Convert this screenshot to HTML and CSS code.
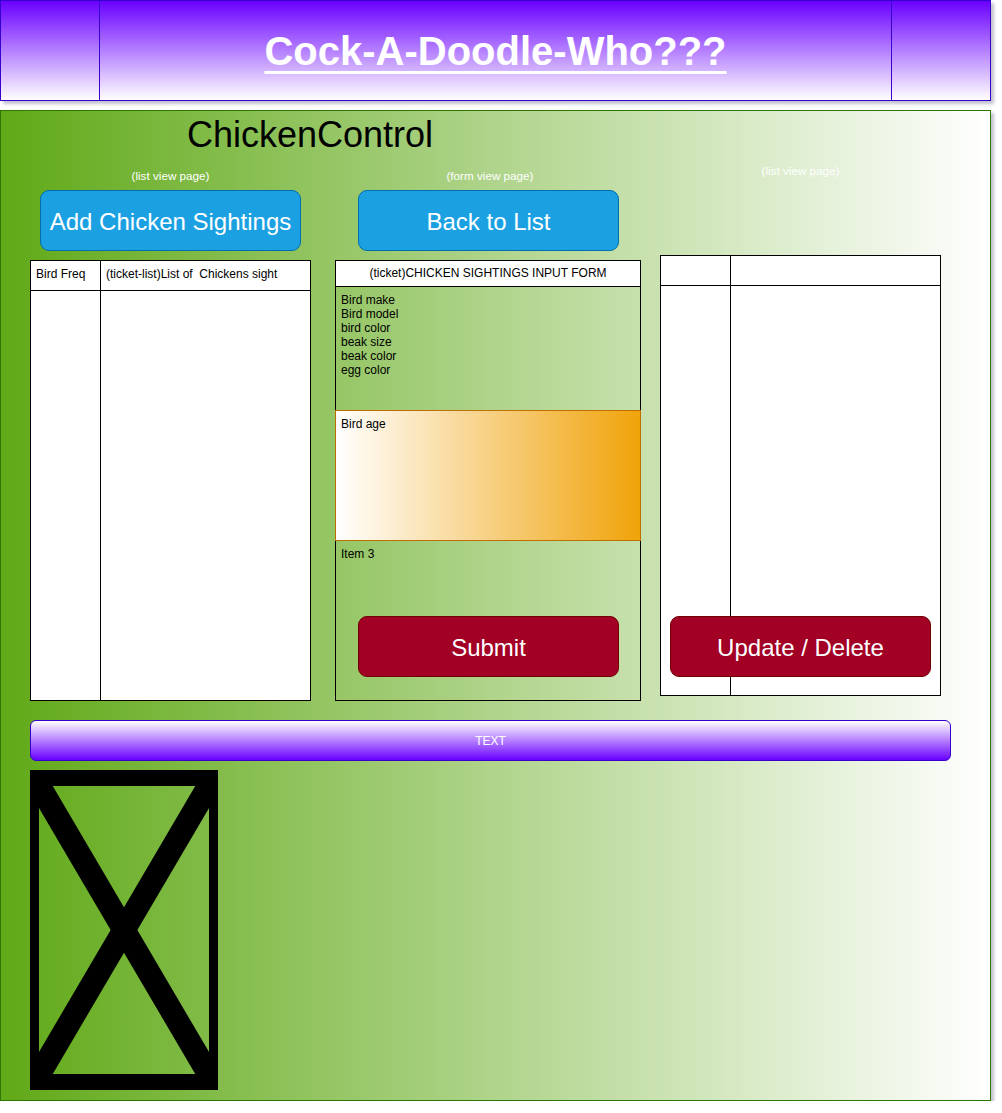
FILE: index.html
```html
<!DOCTYPE html>
<html lang="en">
<head>
<meta charset="utf-8">
<title>Cock-A-Doodle-Who???</title>
<link rel="stylesheet" href="styles.css">
</head>
<body>
<header class="topbar">
  <div class="topbar-cell"></div>
  <div class="topbar-cell topbar-middle"><h1 class="site-title">Cock-A-Doodle-Who???</h1></div>
  <div class="topbar-cell"></div>
</header>
<main class="panel">
  <h2 class="app-title">ChickenControl</h2>
  <div class="columns">
    <section class="col col-list">
      <p class="page-label">(list view page)</p>
      <button class="btn btn-blue btn-list">Add Chicken Sightings</button>
      <div class="grid-table">
        <div class="gcell gcell-first gcell-head">Bird Freq</div>
        <div class="gcell gcell-head">(ticket-list)List of&nbsp; Chickens sight</div>
        <div class="gcell gcell-first"></div>
        <div class="gcell"></div>
      </div>
    </section>
    <section class="col col-form">
      <p class="page-label page-label-form">(form view page)</p>
      <button class="btn btn-blue btn-form">Back to List</button>
      <div class="form-box">
        <div class="form-head">(ticket)CHICKEN SIGHTINGS INPUT FORM</div>
        <div class="form-fields">Bird make<br>Bird model<br>bird color<br>beak size<br>beak color<br>egg color</div>
        <div class="form-orange">Bird age</div>
        <div class="form-item">
          <div>Item 3</div>
          <button class="btn btn-red btn-submit">Submit</button>
        </div>
      </div>
    </section>
    <section class="col col-edit">
      <p class="page-label">(list view page)</p>
      <div class="grid-table grid-table-edit">
        <div class="gcell gcell-first gcell-head"></div>
        <div class="gcell gcell-head"></div>
        <div class="gcell gcell-first"></div>
        <div class="gcell"></div>
        <button class="btn btn-red btn-update">Update / Delete</button>
      </div>
    </section>
  </div>
  <div class="textbar">TEXT</div>
  <svg class="placeholder" width="188" height="320" viewBox="0 0 188 320">
    <path fill="#000" fill-rule="evenodd" d="M0 0H188V320H0Z M9 16V304H179V16Z"/>
    <g stroke="#000" stroke-width="23">
      <line x1="0" y1="0" x2="188" y2="320"/>
      <line x1="188" y1="0" x2="0" y2="320"/>
    </g>
  </svg>
</main>
</body>
</html>
```
FILE: styles.css
```css
* { box-sizing: border-box; }
html, body { margin: 0; padding: 0; background: #fff; }
body {
  font-family: "Liberation Sans", Arial, Helvetica, sans-serif;
  color: #000;
  width: 1002px;
}

.topbar {
  width: 991px;
  height: 101px;
  border: 1px solid #3700cc;
  background: linear-gradient(to bottom, #6a00ff, #ffffff);
  display: grid;
  grid-template-columns: 98px 1fr 98px;
  box-shadow: 3px 3px 3px rgba(40, 40, 90, 0.28);
}
.topbar-middle {
  border-left: 1px solid #3700cc;
  border-right: 1px solid #3700cc;
  display: flex;
  align-items: center;
  justify-content: center;
}
.site-title {
  margin: 0;
  padding-top: 1px;
  font-size: 40px;
  font-weight: bold;
  color: #fff;
  text-decoration: underline;
  text-decoration-thickness: 3px;
  text-underline-offset: 6px;
}

.panel {
  margin-top: 9px;
  width: 991px;
  height: 991px;
  border: 1px solid #2d7600;
  background: linear-gradient(to right, #60a917, #ffffff);
  box-shadow: 3px 3px 3px rgba(40, 40, 90, 0.28);
}
.app-title {
  margin: 0;
  padding: 3px 0 0 186px;
  height: 45px;
  font-size: 36px;
  line-height: 42px;
  font-weight: normal;
}

.columns {
  display: flex;
  align-items: flex-start;
  padding-left: 29px;
}
.col {
  display: flex;
  flex-direction: column;
  align-items: flex-start;
}
.col-list { width: 281px; padding-top: 13px; }
.col-form { width: 306px; margin-left: 24px; padding-top: 13px; }
.col-edit { width: 281px; margin-left: 19px; padding-top: 8px; }

.page-label {
  margin: 0;
  width: 100%;
  font-size: 11.7px;
  line-height: 14px;
  color: #fff;
  text-align: center;
}
.page-label-form { padding-left: 4px; }

.btn {
  display: block;
  width: 261px;
  height: 61px;
  padding: 2px 0 0;
  border-radius: 9px;
  border: 1px solid;
  font-family: inherit;
  font-size: 24px;
  color: #fff;
  cursor: pointer;
}
.btn-blue { background: #1ba1e2; border-color: #006eaf; }
.btn-red { background: #a20025; border-color: #6f0000; }
.btn-list { margin: 7px 0 0 10px; }
.btn-form { margin: 7px 0 0 23px; }

.grid-table {
  width: 281px;
  height: 441px;
  margin-top: 9px;
  border: 1px solid #000;
  background: #fff;
  display: grid;
  grid-template-columns: 70px 1fr;
  grid-template-rows: 30px 1fr;
  font-size: 12px;
}
.grid-table-edit { margin-top: 77px; position: relative; }
.gcell { padding-left: 5px; line-height: 27px; white-space: nowrap; overflow: hidden; }
.gcell-first { border-right: 1px solid #000; }
.gcell-head { border-bottom: 1px solid #000; }
.btn-update { position: absolute; top: 360px; left: 9px; }

.form-box {
  width: 306px;
  height: 441px;
  margin-top: 9px;
  border: 1px solid #000;
  display: flex;
  flex-direction: column;
  font-size: 12px;
  line-height: 14px;
}
.form-head {
  height: 26px;
  background: #fff;
  border-bottom: 1px solid #000;
  text-align: center;
  line-height: 25px;
}
.form-fields {
  height: 123px;
  padding: 6px 5px 0;
}
.form-orange {
  height: 131px;
  margin: 0 -1px;
  padding: 6px 5px 0;
  border: 1px solid #bd7000;
  background: linear-gradient(to right, #ffffff, #f0a30a);
}
.form-item {
  flex: 1;
  padding: 6px 5px 0;
}
.btn-submit { margin: 55px 0 0 17px; }

.textbar {
  margin: 19px 0 0 29px;
  width: 921px;
  height: 41px;
  border: 1px solid #3700cc;
  border-radius: 6px;
  background: linear-gradient(to bottom, #ffffff, #6a00ff);
  color: #fff;
  font-size: 12px;
  display: flex;
  align-items: center;
  justify-content: center;
}

.placeholder {
  display: block;
  margin: 9px 0 0 29px;
}
```
